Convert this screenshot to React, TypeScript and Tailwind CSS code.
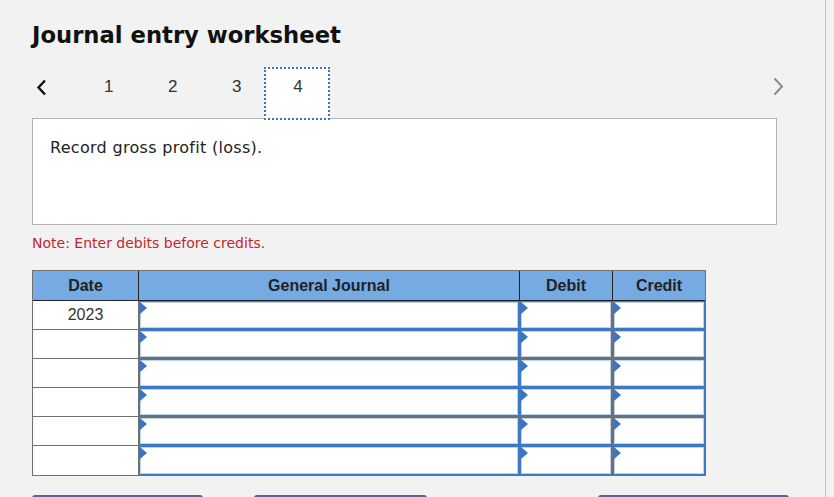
const rows = ['2023', '', '', '', '', ''];

function Marker() {
  return (
    <svg className="absolute left-0 top-0" width="7" height="12" viewBox="0 0 7 12">
      <polygon points="0,0 7,6 0,12" fill="#3a75c4" />
    </svg>
  );
}

function InputCell() {
  return (
    <div className="relative h-full border border-[#3d79c2] bg-white shadow-[inset_0_0_0_1px_#bcd4ef]">
      <Marker />
    </div>
  );
}

export default function App() {
  return (
    <div className="h-[497px] w-[834px] overflow-hidden bg-[#f2f2f2]">
      <div className="h-full w-[826px] border-r border-[#c4c4c4] pl-[32px] pt-[20px]">
        <h1 className="font-['DejaVu_Sans',Verdana,sans-serif] text-[22.7px] font-bold leading-[31px] text-[#111]">
          Journal entry worksheet
        </h1>

        <div className="mt-[16px] flex h-[53px] items-start font-['Liberation_Sans',Arial,sans-serif] text-[17px] leading-[20px] text-[#333]">
          <svg className="ml-[4px] mt-[12px]" width="11" height="17" viewBox="0 0 11 17">
            <polyline points="9,1.5 2.5,8.5 9,15.5" fill="none" stroke="#111" strokeWidth="2.4" />
          </svg>
          <div className="ml-[57px] flex items-start">
            <span className="mt-[10px] w-[64px]">1</span>
            <span className="mt-[10px] w-[64px]">2</span>
            <span className="mt-[10px] w-[32px]">3</span>
            <div className="flex h-[53px] w-[66px] justify-center border-2 border-dotted border-[#3a75c4] bg-white pt-[8px]">
              <span className="ml-[2px]">4</span>
            </div>
          </div>
          <svg className="ml-[443px] mt-[10px]" width="11" height="19" viewBox="0 0 11 19">
            <polyline points="1.5,1.5 9,9.5 1.5,17.5" fill="none" stroke="#8a8a8a" strokeWidth="2" />
          </svg>
        </div>

        <div className="-mt-[2px] h-[107px] w-[745px] border border-[#b3b3b3] bg-white px-[17px] pt-[17px] font-['DejaVu_Sans',Verdana,sans-serif] text-[16px] tracking-[0.3px] text-[#222]">
          Record gross profit (loss).
        </div>

        <p className="mt-[8px] font-['DejaVu_Sans',Verdana,sans-serif] text-[14px] leading-[20px] text-[#c1272d]">
          Note: Enter debits before credits.
        </p>

        <div className="mt-[17px] w-[674px] border border-[#707070] font-['Liberation_Sans',Arial,sans-serif]">
          <div className="grid h-[30px] grid-cols-[106px_381px_93px_92px] border-b border-[#222] bg-[#76aae3] text-[16px] font-bold text-[#222]">
            <div className="flex items-center justify-center border-r border-[#222]">Date</div>
            <div className="flex items-center justify-center border-r border-[#222]">General Journal</div>
            <div className="flex items-center justify-center border-r border-[#222]">Debit</div>
            <div className="flex items-center justify-center">Credit</div>
          </div>
          {rows.map((d, i) => (
            <div
              key={i}
              className={`grid h-[29px] grid-cols-[106px_381px_93px_92px] ${i < rows.length - 1 ? 'border-b border-[#707070]' : ''}`}
            >
              <div className="flex items-center justify-center border-r border-[#707070] bg-white text-[16px] text-[#333]">
                {d}
              </div>
              <div className="border-r border-[#707070]">
                <InputCell />
              </div>
              <div className="border-r border-[#707070]">
                <InputCell />
              </div>
              <div>
                <InputCell />
              </div>
            </div>
          ))}
        </div>

        <div className="mt-[19px] flex">
          <div className="h-[30px] w-[171px] rounded-t-[3px] border-t-2 border-[#3072c4] bg-[#f2f2f2]" />
          <div className="ml-[51px] h-[30px] w-[173px] rounded-t-[3px] border-t-2 border-[#3072c4] bg-[#f2f2f2]" />
          <div className="ml-[171px] h-[30px] w-[191px] rounded-t-[3px] border-t-2 border-[#3072c4] bg-[#f2f2f2]" />
        </div>
      </div>
    </div>
  );
}
